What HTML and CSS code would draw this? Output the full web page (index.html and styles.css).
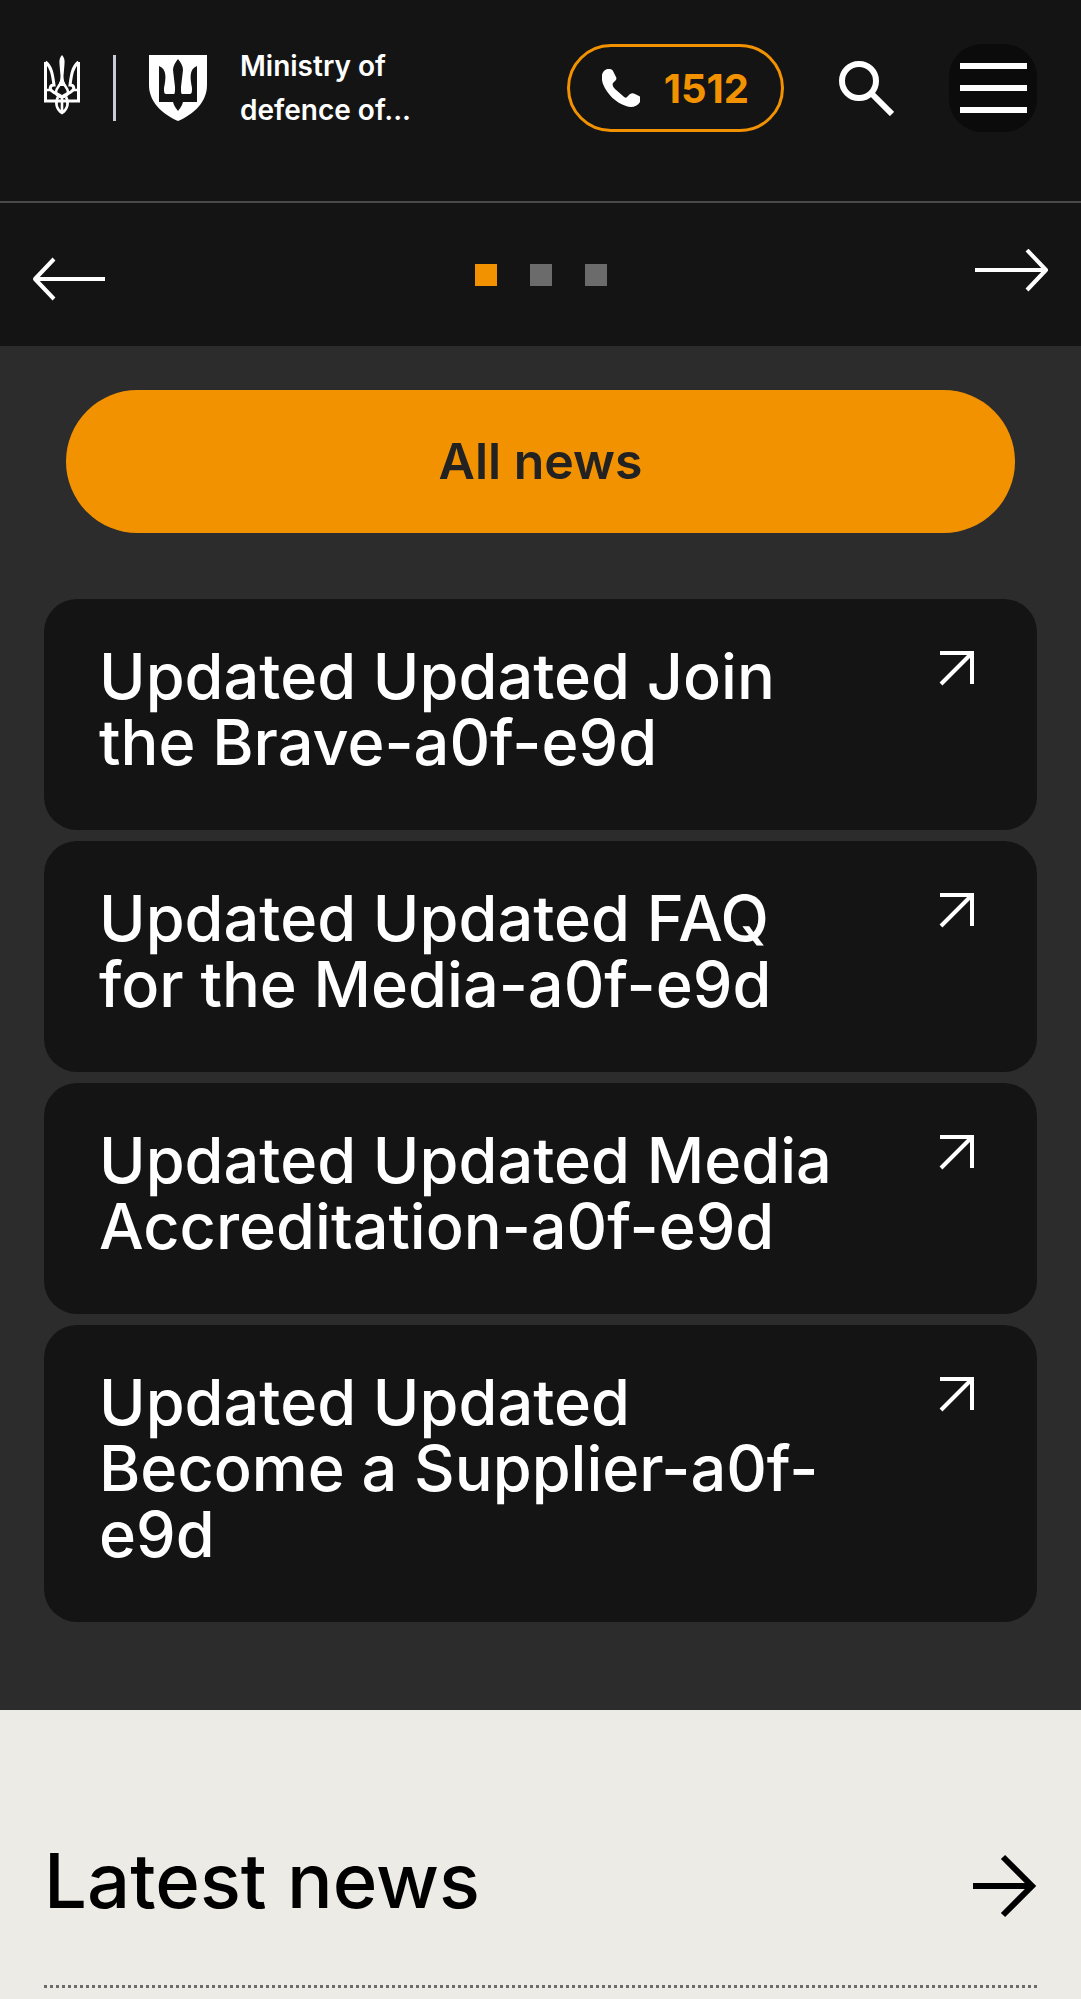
FILE: index.html
```html
<!DOCTYPE html>
<html lang="en">
<head>
<meta charset="utf-8">
<meta name="viewport" content="width=device-width, initial-scale=1">
<title>Ministry of defence of Ukraine</title>
<link rel="stylesheet" href="styles.css">
</head>
<body>
<header class="header">
  <a class="brand" href="#">
    <svg class="trident" viewBox="0 0 36 60" fill="none" stroke="#fff" stroke-width="2.600" aria-hidden="true">
      <path d="M18 0c-2 2-3 5-2.500 9l1 12c0 4-1 7-2.800 10h8.600c-1.800-3-2.800-6-2.800-10l1-12c.5-4-.5-7-2.500-9z" fill="#fff" stroke="none"/>
      <path d="M1.500 7v39h33V7" stroke-width="3"/>
      <path d="M1.500 7c6 5 7 12 8.500 23-4 0-5 4-2 6 3 3 7 3 10 6 3-3 7-3 10-6 3-2 2-6-2-6 1.500-11 2.500-18 8.500-23" stroke-width="3"/>
      <path d="M17 27c-1 4-5 6-5 10 0 3 3 5 6 5s6-2 6-5c0-4-4-6-5-10M1 35h6M29 35h6"/>
      <path d="M14 42c-3 5-2 12 4 16 6-4 7-11 4-16M18 41v16"/>
    </svg>
    <span class="divider"></span>
    <svg class="shield" viewBox="0 0 58 66" aria-hidden="true">
      <path fill="#fff" d="M0 0h58v30c0 17-13 29-29 36C13 59 0 47 0 30z"/>
      <path fill="#141414" d="M29 4c3 4 5 7 5 11l-2 17c0 4 0 7 1 7h8c2 0 2-3 2-6-2-10-3-19 5-22v36H34c-1 4-3 6-5 9-2-3-4-5-5-9H10V11c8 3 7 12 5 22 0 3 0 6 2 6h8c1 0 1-3 1-7l-2-17c0-4 2-7 5-11z"/>
    </svg>
    <span class="brand-name">Ministry of<br>defence of...</span>
  </a>
  <div class="tools">
    <a class="hotline" href="tel:1512">
      <svg class="phone" viewBox="0 0 38 38" aria-hidden="true"><path fill="#fff" d="M4 .5C7-.5 10 0 11 2l3 6c1 2 0 3-1 4l-2 2c-1 2 0 4 2 6l8 7c2 2 3 2 4 1l3-3c2-1 3-1 5 0l4 2c2 1 2 4 1 6-3 5-9 6-14 4C14 34 5 25 1 15-1 9-1 3 4 .5z"/></svg>
      <span>1512</span>
    </a>
    <button class="search" type="button" aria-label="Search">
      <svg viewBox="0 0 55 55" fill="none" stroke="#fff" stroke-width="6" aria-hidden="true"><circle cx="20" cy="20" r="17"/><path d="M32 32l21 21"/></svg>
    </button>
    <button class="menu" type="button" aria-label="Menu"><span></span><span></span><span></span></button>
  </div>
</header>
<main>
  <section class="slider">
    <button type="button" aria-label="Previous slide">
      <svg viewBox="0 0 74 52" fill="none" stroke="#fff" stroke-width="4" stroke-linejoin="round" aria-hidden="true"><path d="M73 30H3M22 10L3 30l19 20"/></svg>
    </button>
    <div class="dots">
      <button class="dot dot-active" type="button" aria-label="Slide 1"></button>
      <button class="dot" type="button" aria-label="Slide 2"></button>
      <button class="dot" type="button" aria-label="Slide 3"></button>
    </div>
    <button type="button" aria-label="Next slide">
      <svg viewBox="0 0 74 52" fill="none" stroke="#fff" stroke-width="4" stroke-linejoin="round" aria-hidden="true"><path d="M0 21h71M52 1l19 20-19 20"/></svg>
    </button>
  </section>
  <section class="links">
    <a class="all-news" href="#">All news</a>
    <a class="card" href="#">
      <span class="card-title">Updated Updated Join the Brave-a0f-e9d</span>
      <svg viewBox="0 0 36 36" fill="none" stroke="#fff" stroke-width="4" aria-hidden="true"><path d="M1 3h32v31M33 3L2 34"/></svg>
    </a>
    <a class="card" href="#">
      <span class="card-title">Updated Updated FAQ for the Media-a0f-e9d</span>
      <svg viewBox="0 0 36 36" fill="none" stroke="#fff" stroke-width="4" aria-hidden="true"><path d="M1 3h32v31M33 3L2 34"/></svg>
    </a>
    <a class="card" href="#">
      <span class="card-title">Updated Updated Media Accreditation-a0f-e9d</span>
      <svg viewBox="0 0 36 36" fill="none" stroke="#fff" stroke-width="4" aria-hidden="true"><path d="M1 3h32v31M33 3L2 34"/></svg>
    </a>
    <a class="card" href="#">
      <span class="card-title">Updated Updated Become a Supplier-a0f-e9d</span>
      <svg viewBox="0 0 36 36" fill="none" stroke="#fff" stroke-width="4" aria-hidden="true"><path d="M1 3h32v31M33 3L2 34"/></svg>
    </a>
  </section>
  <section class="latest">
    <div class="latest-head">
      <h2>Latest news</h2>
      <a href="#" aria-label="All latest news">
        <svg viewBox="0 0 64 64" fill="none" stroke="#000" stroke-width="6" aria-hidden="true"><path d="M0 32h59M30 3l29 29-29 29"/></svg>
      </a>
    </div>
  </section>
</main>
</body>
</html>
```
FILE: styles.css
```css
* {
  box-sizing: border-box;
}

body {
  margin: 0;
  background: #ecebe6;
  color: #fff;
  font-family: Inter, "Liberation Sans", sans-serif;
  font-weight: 500;
}

a {
  color: inherit;
  text-decoration: none;
}

button {
  padding: 0;
  border: 0;
  background: none;
}

svg {
  display: block;
  flex: none;
}

.header {
  display: flex;
  justify-content: space-between;
  align-items: flex-start;
  padding: 44px 44px 69px;
  border-bottom: 2px solid #4a4a4a;
  background: #141414;
}

.brand {
  display: flex;
  align-items: center;
}

.trident {
  width: 36px;
  height: 60px;
  margin-bottom: 6px;
}

.divider {
  width: 3px;
  height: 66px;
  margin: 0 33px;
  background: #c9ccd6;
}

.shield {
  width: 58px;
  height: 66px;
}

.brand-name {
  margin-left: 33px;
  font-size: 28px;
  font-weight: 600;
  line-height: 44px;
}

.tools {
  display: flex;
  align-items: center;
}

.hotline {
  display: flex;
  align-items: center;
  gap: 24px;
  height: 88px;
  padding: 0 32px;
  border: 3px solid #f39200;
  border-radius: 44px;
  color: #f39200;
  font-size: 40px;
  font-weight: 700;
}

.phone {
  width: 38px;
  height: 38px;
}

.search {
  margin: 0 55px;
}

.search svg {
  width: 55px;
  height: 55px;
}

.menu {
  display: flex;
  flex-direction: column;
  align-items: center;
  justify-content: center;
  gap: 16px;
  width: 88px;
  height: 88px;
  border-radius: 33px;
  background: #0b0b0b;
}

.menu span {
  width: 67px;
  height: 6px;
  background: #fff;
}

.slider {
  display: flex;
  align-items: center;
  justify-content: space-between;
  height: 143px;
  padding: 0 32px;
  background: #141414;
}

.slider svg {
  width: 74px;
  height: 52px;
}

.dots {
  display: flex;
  gap: 33px;
}

.dot {
  width: 22px;
  height: 22px;
  background: #6b6b6b;
}

.dot-active {
  background: #f39200;
}

.links {
  display: flex;
  flex-direction: column;
  gap: 11px;
  padding: 44px 44px 88px;
  background: #2c2c2c;
}

.all-news {
  margin: 0 22px 55px;
  padding: 44px;
  border-radius: 72px;
  background: #f39200;
  color: #222;
  font-size: 50px;
  font-weight: 600;
  line-height: 55px;
  text-align: center;
}

.card {
  display: flex;
  justify-content: space-between;
  gap: 88px;
  padding: 44px 62px 55px 55px;
  border-radius: 33px;
  background: #141414;
}

.card-title {
  font-size: 63px;
  line-height: 66px;
}

.card svg {
  width: 36px;
  height: 36px;
  margin-top: 7px;
}

.latest {
  padding: 132px 44px 11px;
  color: #000;
}

.latest-head {
  display: flex;
  align-items: center;
  justify-content: space-between;
  padding-bottom: 55px;
  border-bottom: 3px dotted #6b6b6b;
}

.latest-head h2 {
  margin: 0;
  padding-bottom: 12px;
  font-size: 76px;
  font-weight: 500;
  line-height: 76px;
}

.latest-head svg {
  width: 64px;
  height: 64px;
}
```
